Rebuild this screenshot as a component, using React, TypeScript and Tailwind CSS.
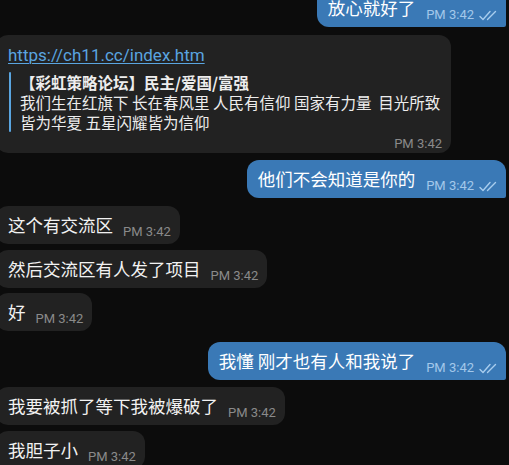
import React from "react";

const CJK = { fontFamily: '"Noto Sans CJK SC", "Noto Sans", sans-serif' };
const ROBOTO = { fontFamily: 'Roboto, "Liberation Sans", sans-serif' };

function Checks() {
  return (
    <svg width="19" height="11" viewBox="0 0 19 11" fill="none" stroke="#a8cdee" strokeWidth="1.4" strokeLinecap="round" strokeLinejoin="round" className="ml-[5px] mb-[2px]">
      <path d="M1 6.5 L4 9.5 L11 1.5" />
      <path d="M8.5 9.5 L16.5 1.5" />
    </svg>
  );
}

function Time({ out }: { out?: boolean }) {
  return (
    <span
      style={ROBOTO}
      className={`text-[13px] leading-[16px] whitespace-nowrap translate-y-[3px] flex items-end ${out ? "text-[#a3c8ea]" : "text-[#8a8a8a]"}`}
    >
      PM 3:42
      {out && <Checks />}
    </span>
  );
}

function Out({ text, mt }: { text: string; mt: string }) {
  return (
    <div className={`flex justify-end pr-[3px] ${mt}`}>
      <div className="flex items-end bg-[#3a79b6] rounded-l-[12px] rounded-tr-[12px] rounded-br-[2px] pl-[11px] pr-[8px] py-[7px]">
        <span style={CJK} className="text-[17.5px] leading-[24px] text-white">{text}</span>
        <span className="ml-[11px]"><Time out /></span>
      </div>
    </div>
  );
}

function In({ text, mt }: { text: string; mt: string }) {
  return (
    <div className={`flex justify-start ${mt}`}>
      <div className="flex items-end bg-[#222222] rounded-[12px] ml-[-4px] pl-[12px] pr-[9px] py-[7px]">
        <span style={CJK} className="text-[17.5px] leading-[24px] text-[#f2f2f2]">{text}</span>
        <span className="ml-[10px]"><Time /></span>
      </div>
    </div>
  );
}

export default function App() {
  return (
    <div className="w-[509px] h-[465px] overflow-hidden bg-[#0c0c0c]">
      <div className="flex flex-col mt-[-11px]">
        <Out text="放心就好了" mt="mt-0" />
        <div className="flex justify-start mt-[8px]">
          <div className="flex flex-col bg-[#222222] rounded-[12px] ml-[-4px] w-[455px] pl-[12px] pr-[9px] pt-[8px] pb-[4px]">
            <a style={ROBOTO} className="text-[17px] leading-[24px] text-[#5aa5e0] underline underline-offset-[2px] decoration-[1px]">
              https://ch11.cc/index.htm
            </a>
            <div className="flex mt-[5px]">
              <div className="w-[2px] bg-[#5aa5e0] rounded-full ml-[1px]" />
              <div style={CJK} className="ml-[9px] text-[15.5px] leading-[20px] text-[#ededed] whitespace-pre">
                <div className="font-bold">【彩虹策略论坛】民主/爱国/富强</div>
                <div>我们生在红旗下 长在春风里 人民有信仰 国家有力量  目光所致</div>
                <div>皆为华夏 五星闪耀皆为信仰</div>
              </div>
            </div>
            <div className="flex justify-end mt-[1px]">
              <Time />
            </div>
          </div>
        </div>
        <Out text="他们不会知道是你的" mt="mt-[7px]" />
        <In text="这个有交流区" mt="mt-[8px]" />
        <In text="然后交流区有人发了项目" mt="mt-[6px]" />
        <In text="好" mt="mt-[5px]" />
        <Out text="我懂 刚才也有人和我说了" mt="mt-[11px]" />
        <In text="我要被抓了等下我被爆破了" mt="mt-[7px]" />
        <In text="我胆子小" mt="mt-[6px]" />
      </div>
    </div>
  );
}
